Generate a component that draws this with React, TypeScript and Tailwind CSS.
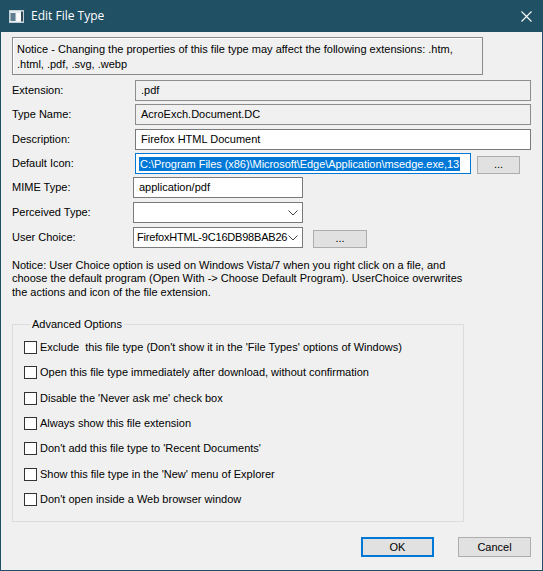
import React from "react";

const ui = { fontFamily: '"Liberation Sans", Arial, sans-serif' };

const fields = [
  { label: "Extension:", value: ".pdf", kind: "readonly" },
  { label: "Type Name:", value: "AcroExch.Document.DC", kind: "readonly" },
  { label: "Description:", value: "Firefox HTML Document", kind: "text" },
];

const options = [
  "Exclude  this file type (Don't show it in the 'File Types' options of Windows)",
  "Open this file type immediately after download, without confirmation",
  "Disable the 'Never ask me' check box",
  "Always show this file extension",
  "Don't add this file type to 'Recent Documents'",
  "Show this file type in the 'New' menu of Explorer",
  "Don't open inside a Web browser window",
];

function Chevron() {
  return (
    <svg width="10" height="6" viewBox="0 0 10 6" className="shrink-0">
      <path d="M0.5 0.5 L5 5 L9.5 0.5" fill="none" stroke="#444" strokeWidth="1" />
    </svg>
  );
}

function SmallButton({ className }: { className: string }) {
  return (
    <div
      className={`flex items-center justify-center border border-[#adadad] bg-[#e1e1e1] text-[11px] leading-none text-black ${className}`}
    >
      <span className="-mt-[2px]">...</span>
    </div>
  );
}

function Label({ children }: { children: React.ReactNode }) {
  return <div className="w-[121px] shrink-0 text-[11px] text-black">{children}</div>;
}

export default function App() {
  return (
    <div
      style={ui}
      className="flex h-[571px] w-[543px] flex-col border-x border-b border-[#1f5064] bg-[#f0f0f0] select-none"
    >
      {/* title bar */}
      <div className="flex h-[32px] shrink-0 items-center bg-[#1f5064] text-white">
        <svg width="15" height="13" viewBox="0 0 15 13" className="ml-[8px]">
          <rect x="0.5" y="0.5" width="14" height="12" fill="#e8eef2" stroke="#c4ced4" />
          <rect x="1.5" y="3" width="5" height="8" fill="#5d7f8f" />
          <rect x="7.5" y="3" width="5" height="8" fill="#ffffff" />
          <rect x="12" y="1.5" width="2" height="10" fill="#2f4a58" />
        </svg>
        <span className="ml-[7px] text-[12px]" style={{ fontFamily: '"Open Sans", "Liberation Sans", sans-serif' }}>
          Edit File Type
        </span>
        <svg width="11" height="11" viewBox="0 0 11 11" className="mr-[10px] ml-auto">
          <path d="M0.5 0.5 L10.5 10.5 M10.5 0.5 L0.5 10.5" stroke="#ffffff" strokeWidth="1.1" />
        </svg>
      </div>

      <div className="flex flex-1 flex-col px-[11px]">
        {/* extensions notice */}
        <div className="mt-[5px] h-[38px] w-[471px] border border-[#8a8a8a] px-[4px] pt-[4px] text-[11px] leading-[14.5px] text-black shadow-[inset_1px_1px_0_#ffffff]">
          Notice - Changing the properties of this file type may affect the following extensions: .htm,
          <br />
          .html, .pdf, .svg, .webp
        </div>

        {/* property rows */}
        <div className="mt-[5px] flex flex-col">
          {fields.map((f, i) => (
            <div key={f.label} className={`flex h-[21px] items-center ${i === 0 ? "" : i === 2 ? "mt-[4px]" : "mt-[3px]"}`}>
              <Label>{f.label}</Label>
              <div
                className={`ml-[2px] flex h-[21px] w-[397px] items-center border px-[5px] text-[11px] ${
                  f.kind === "readonly" ? "border-[#8d8d8d] bg-[#f0f0f0]" : "border-[#7a7a7a] bg-white"
                }`}
              >
                {f.value}
              </div>
            </div>
          ))}

          <div className="mt-[3px] flex h-[21px] items-center">
            <Label>Default Icon:</Label>
            <div className="ml-[2px] flex h-[21px] w-[336px] items-center overflow-hidden border border-[#0078d7] bg-white px-[3px] text-[11px]">
              <span className="bg-[#0078d7] px-px leading-[14px] tracking-[-0.05px] whitespace-nowrap text-white">
                C:\Program Files (x86)\Microsoft\Edge\Application\msedge.exe,13
              </span>
            </div>
            <SmallButton className="mt-[3px] ml-[6px] h-[18px] w-[43px]" />
          </div>

          <div className="mt-[3px] flex h-[21px] items-center">
            <Label>MIME Type:</Label>
            <div className="flex h-[21px] w-[170px] items-center border border-[#7a7a7a] bg-white px-[5px] text-[11px]">
              application/pdf
            </div>
          </div>

          <div className="mt-[4px] flex h-[21px] items-center">
            <Label>Perceived Type:</Label>
            <div className="flex h-[21px] w-[170px] items-center justify-end border border-[#7a7a7a] bg-white pr-[4px]">
              <Chevron />
            </div>
          </div>

          <div className="mt-[4px] flex h-[21px] items-center">
            <Label>User Choice:</Label>
            <div className="flex h-[21px] w-[170px] items-center border border-[#7a7a7a] bg-white pr-[4px] pl-[3px] text-[11px]">
              <span className="tracking-[-0.2px] whitespace-nowrap">FirefoxHTML-9C16DB98BAB26</span>
              <div className="ml-auto">
                <Chevron />
              </div>
            </div>
            <SmallButton className="mt-[3px] ml-[10px] h-[18px] w-[54px]" />
          </div>
        </div>

        {/* user choice notice */}
        <p className="mt-[11px] text-[11px] leading-[13.3px] text-black">
          Notice: User Choice option is used on Windows Vista/7 when you right click on a file, and
          <br />
          choose the default program (Open With -&gt; Choose Default Program). UserChoice overwrites
          <br />
          the actions and icon of the file extension.
        </p>

        {/* advanced options group */}
        <fieldset className="mt-[19px] h-[204px] w-[452px] border border-[#dcdcdc] px-[11px] pt-[4px]">
          <legend className="ml-[6px] px-[2px] text-[11px] leading-[13px] text-black">Advanced Options</legend>
          <div className="flex flex-col">
            {options.map((o, i) => (
              <label key={o} className={`flex h-[25px] items-center ${i === 2 || i === 5 ? "mt-[1px]" : ""}`}>
                <span className="h-[13px] w-[13px] shrink-0 border border-[#333333] bg-white" />
                <span className="ml-[3px] text-[11px] whitespace-pre text-black">{o}</span>
              </label>
            ))}
          </div>
        </fieldset>

        {/* dialog buttons */}
        <div className="mt-auto mb-[13px] flex justify-end gap-[24px]">
          <button className="h-[20px] w-[73px] border-2 border-[#0078d7] bg-[#e1e1e1] text-[11px] text-black">
            OK
          </button>
          <button className="h-[20px] w-[73px] border border-[#adadad] bg-[#e1e1e1] text-[11px] text-black">
            Cancel
          </button>
        </div>
      </div>
    </div>
  );
}
